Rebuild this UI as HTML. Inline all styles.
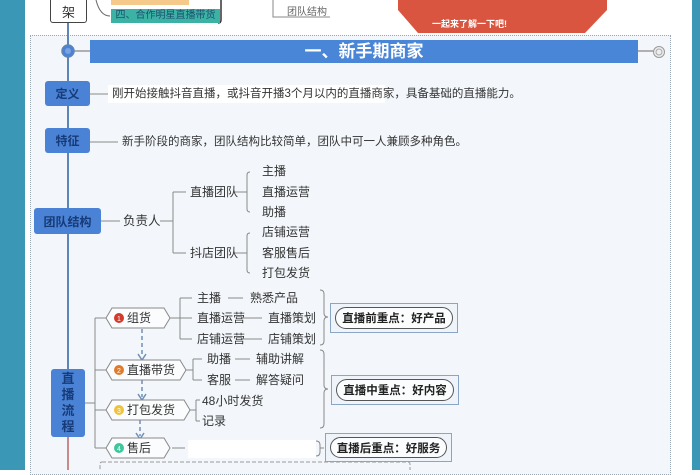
<!DOCTYPE html>
<html><head><meta charset="utf-8">
<style>
*{margin:0;padding:0;box-sizing:border-box}
body{width:700px;height:470px;overflow:hidden;position:relative;background:#fff;font-family:"Liberation Sans","Noto Sans CJK SC",sans-serif;color:#333}
.a{position:absolute;white-space:nowrap}
.t{position:absolute;white-space:nowrap;font-size:12px;line-height:14px;color:#333}
.bx{position:absolute;background:#4a83d6;border-radius:3px;color:#173a78;font-weight:bold;font-size:12px;display:flex;align-items:center;justify-content:center}
.pill{position:absolute;border:1.5px solid #8aa6c4;background:#eef4fa}
.pill div{position:absolute;left:4px;right:4px;top:3px;bottom:3px;border:1.5px solid #555;border-radius:14px;background:#fbfcfd;font-weight:bold;font-size:11.5px;display:flex;align-items:center;justify-content:center;color:#222}
</style></head><body>
<div class="a" style="left:0;top:0;width:25px;height:470px;background:#3a97b6"></div>
<div class="a" style="left:692px;top:0;width:8px;height:470px;background:#3a97b6"></div>
<div class="a" style="left:30px;top:35px;width:641px;height:440px;background:#f3f7fb;border:1.5px dotted #9aa8b4"></div>

<svg class="a" style="left:0;top:0" width="700" height="470">
<path d="M68 23 V470" stroke="#5f84b6" stroke-width="2" fill="none"/>
<path d="M68 437 V470" stroke="#c98a8a" stroke-width="2"/>
<path d="M96 0 Q100 16 110 16" stroke="#666" fill="none"/>
<path d="M221 0 V20 Q221 23 218 23" stroke="#333" stroke-width="1.5" fill="none"/>
<path d="M273 0 V17 H330" stroke="#888" fill="none"/>
<path d="M398 0 H607 V10 L585 33 H418 L398 10 Z" fill="#d9553f"/>
<path d="M68 51 H90 M638 51 H654" stroke="#999" stroke-width="1.5"/>
<circle cx="68" cy="51" r="6" fill="#4a83d6" stroke="#5f84b6" stroke-width="1.5"/>
<circle cx="68" cy="51" r="3" fill="#7aa3e0"/>
<circle cx="659" cy="52" r="5.5" fill="#eee" stroke="#999"/>
<circle cx="659" cy="52" r="3" fill="none" stroke="#aaa"/>
<path d="M90 94 H108 M90 142 H118" stroke="#888"/>
<path d="M101 221 H120 M160 221 H173 M173 192 V253 M173 192 H186 M173 253 H186 M235 192 H247 M235 253 H247 M250 172 Q247 172 247 175 V209 Q247 212 250 212 M250 233 Q247 233 247 236 V270 Q247 273 250 273" stroke="#888" fill="none"/>
<path d="M85 403 H95 M95 318 V448 M95 318 H106 M95 370 H106 M95 410 H106 M95 448 H106" stroke="#888" fill="none"/>
<path d="M170 318 H180 M180 298 V339 M180 298 H192 M180 318 H192 M180 339 H192 M186 370 H193 M193 359 V380 M193 359 H202 M193 380 H202 M190 410 H196 M196 400 V421 M196 400 H200 M196 421 H200 M172 448 H185" stroke="#888" fill="none"/>
<path d="M228 298 H243 M242 318 H262 M242 339 H262 M235 359 H250 M235 380 H250" stroke="#888"/>
<path d="M142 329 V356 M142 380 V397 M140 420 V436" stroke="#6f8fb8" stroke-width="1.5" stroke-dasharray="4 3"/>
<path d="M138 354 L142 360 L146 354 M138 394 L142 400 L146 394 M136 433 L140 439 L144 433" stroke="#6f8fb8" stroke-width="1.5" fill="none"/>
<g fill="#fbfcfd" stroke="#888" stroke-width="1">
<path d="M106 318 L112 308 H164 L170 318 L164 328 H112 Z"/>
<path d="M106 370 L112 360 H180 L186 370 L180 380 H112 Z"/>
<path d="M106 410 L112 400 H184 L190 410 L184 420 H112 Z"/>
<path d="M106 448 L112 438 H164 L170 448 L164 458 H112 Z"/>
</g>
<circle cx="119" cy="318" r="5" fill="#d33a2c"/><circle cx="119" cy="370" r="5" fill="#e07b2c"/>
<circle cx="119" cy="410" r="5" fill="#eec23a"/><circle cx="119" cy="448" r="5" fill="#3fc69b"/>
<text x="119" y="321" font-size="7" fill="#fff" text-anchor="middle">1</text>
<text x="119" y="373" font-size="7" fill="#fff" text-anchor="middle">2</text>
<text x="119" y="413" font-size="7" fill="#fff" text-anchor="middle">3</text>
<text x="119" y="451" font-size="7" fill="#fff" text-anchor="middle">4</text>
<path d="M320 290 Q324 290 324 294 V313 Q324 317 328 317 Q324 317 324 321 V341 Q324 345 320 345 M320 350 Q324 350 324 354 V385 Q324 389 328 389 Q324 389 324 393 V424 Q324 428 320 428 M316 441 Q320 441 320 445 V448 H324 M320 448 V452 Q320 456 316 456" stroke="#888" fill="none"/>
<rect x="100" y="462" width="310" height="20" rx="2" fill="none" stroke="#999" stroke-dasharray="4 2"/>
</svg>

<div class="a" style="left:50px;top:-6px;width:37px;height:29px;border:1.5px solid #444;border-top:none;border-radius:0 0 3px 3px;background:#fff;font-size:13px;text-align:center;padding-top:8px">架</div>
<div class="a" style="left:111px;top:0;width:78px;height:5px;background:#f4c98a"></div>
<div class="a" style="left:111px;top:9px;width:109px;height:14px;background:#3bb2a3;font-size:10px;color:#1d4f70;text-align:center;line-height:14px">四、合作明星直播带货</div>
<div class="a" style="left:287px;top:3px;font-size:10px;color:#666">团队结构</div>
<div class="a" style="left:432px;top:17px;font-size:9px;color:#fff;font-weight:bold">一起来了解一下吧!</div>

<div class="a" style="left:90px;top:40px;width:548px;height:23px;background:#4a86d8;color:#fff;font-weight:bold;font-size:17px;text-align:center;line-height:23px">一、新手期商家</div>

<div class="bx" style="left:45px;top:81px;width:45px;height:25px">定义</div>
<div class="a" style="left:108px;top:85px;width:277px;height:18px;background:#fff"></div>
<div class="t" style="left:112px;top:87px;font-size:11.5px">刚开始接触抖音直播，或抖音开播3个月以内的直播商家，具备基础的直播能力。</div>
<div class="bx" style="left:45px;top:128px;width:45px;height:25px">特征</div>
<div class="t" style="left:122px;top:135px;font-size:11.5px">新手阶段的商家，团队结构比较简单，团队中可一人兼顾多种角色。</div>

<div class="bx" style="left:34px;top:208px;width:67px;height:26px">团队结构</div>
<div class="t" style="left:123px;top:214px;font-size:12.5px">负责人</div>
<div class="t" style="left:190px;top:185px">直播团队</div>
<div class="t" style="left:190px;top:246px">抖店团队</div>
<div class="t" style="left:262px;top:164px">主播</div>
<div class="t" style="left:262px;top:185px">直播运营</div>
<div class="t" style="left:262px;top:205px">助播</div>
<div class="t" style="left:262px;top:225px">店铺运营</div>
<div class="t" style="left:262px;top:246px">客服售后</div>
<div class="t" style="left:262px;top:266px">打包发货</div>

<div class="bx" style="left:51px;top:369px;width:34px;height:68px;white-space:normal;padding:0 10px;font-size:13px;line-height:16px;text-align:center">直播流程</div>

<div class="t" style="left:127px;top:311px">组货</div>
<div class="t" style="left:127px;top:363px">直播带货</div>
<div class="t" style="left:127px;top:403px">打包发货</div>
<div class="t" style="left:127px;top:441px">售后</div>
<div class="t" style="left:197px;top:291px">主播</div><div class="t" style="left:250px;top:291px">熟悉产品</div>
<div class="t" style="left:197px;top:311px">直播运营</div><div class="t" style="left:268px;top:311px">直播策划</div>
<div class="t" style="left:197px;top:332px">店铺运营</div><div class="t" style="left:268px;top:332px">店铺策划</div>
<div class="t" style="left:207px;top:352px">助播</div><div class="t" style="left:256px;top:352px">辅助讲解</div>
<div class="t" style="left:207px;top:373px">客服</div><div class="t" style="left:256px;top:373px">解答疑问</div>
<div class="t" style="left:202px;top:394px">48小时发货</div>
<div class="t" style="left:202px;top:414px">记录</div>
<div class="a" style="left:188px;top:440px;width:128px;height:18px;background:#fff"></div>

<div class="pill" style="left:330px;top:303px;width:128px;height:30px"><div>直播前重点：好产品</div></div>
<div class="pill" style="left:331px;top:375px;width:128px;height:30px"><div>直播中重点：好内容</div></div>
<div class="pill" style="left:325px;top:433px;width:127px;height:29px"><div>直播后重点：好服务</div></div>
</body></html>
